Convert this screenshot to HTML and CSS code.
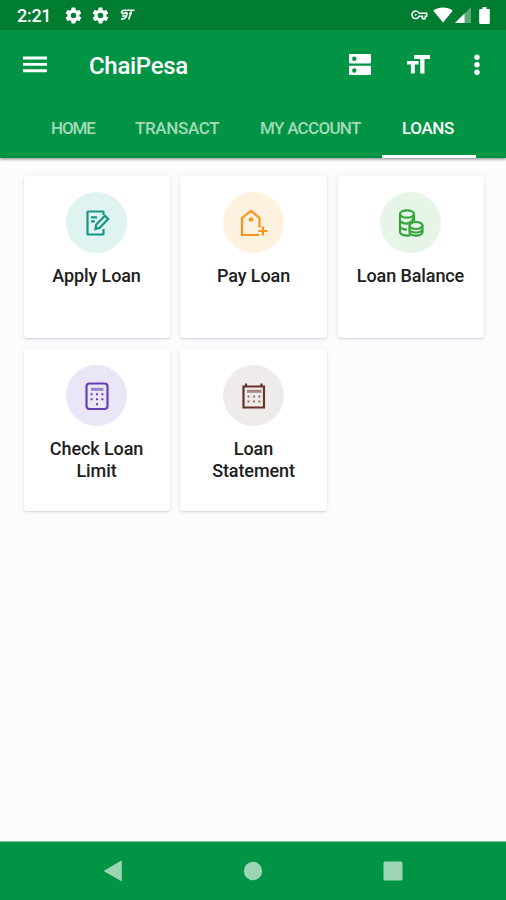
FILE: index.html
```html
<!DOCTYPE html>
<html lang="en">
<head>
    <meta charset="UTF-8">
    <meta name="viewport" content="width=device-width, initial-scale=1.0">
    <title>ChaiPesa</title>
    <link rel="stylesheet" href="styles.css">
</head>
<body>
    <div class="status-bar">
        <span class="clock">2:21</span>
        <svg class="gear" width="19" height="19" viewBox="0 0 24 24"><path fill-rule="evenodd" d="M19.4 13a7.500 7.500 0 0 0 0-2l2.100-1.600a.5.5 0 0 0 .1-.6l-2-3.500a.5.5 0 0 0-.6-.2l-2.500 1a7.300 7.300 0 0 0-1.700-1L14.400 2.400a.5.500 0 0 0-.5-.4h-4a.5.5 0 0 0-.5.400L9.100 5.100a7.700 7.700 0 0 0-1.700 1l-2.500-1a.5.5 0 0 0-.6.200l-2 3.500a.5.500 0 0 0 .1.600L4.500 11a7.900 7.900 0 0 0 0 2l-2.100 1.600a.5.5 0 0 0-.1.600l2 3.500c.1.200.4.300.6.200l2.500-1a7.300 7.300 0 0 0 1.700 1l.4 2.700c0 .2.200.4.500.4h4c.3 0 .5-.2.500-.4l.4-2.700a7.700 7.700 0 0 0 1.700-1l2.500 1c.2.100.5 0 .6-.2l2-3.500a.5.500 0 0 0-.1-.6zM12 15.500a3.500 3.500 0 1 1 0-7 3.500 3.500 0 0 1 0 7z"/></svg>
        <svg class="gear" width="19" height="19" viewBox="0 0 24 24"><path fill-rule="evenodd" d="M19.4 13a7.500 7.500 0 0 0 0-2l2.100-1.600a.5.5 0 0 0 .1-.6l-2-3.500a.5.5 0 0 0-.6-.2l-2.500 1a7.300 7.300 0 0 0-1.700-1L14.400 2.400a.5.500 0 0 0-.5-.4h-4a.5.5 0 0 0-.5.400L9.100 5.100a7.700 7.700 0 0 0-1.700 1l-2.500-1a.5.5 0 0 0-.6.200l-2 3.500a.5.500 0 0 0 .1.600L4.500 11a7.900 7.900 0 0 0 0 2l-2.100 1.600a.5.5 0 0 0-.1.600l2 3.500c.1.200.4.300.6.200l2.500-1a7.300 7.300 0 0 0 1.700 1l.4 2.700c0 .2.200.4.500.4h4c.3 0 .5-.2.500-.4l.4-2.700a7.700 7.700 0 0 0 1.700-1l2.500 1c.2.100.5 0 .6-.2l2-3.500a.5.500 0 0 0-.1-.6zM12 15.500a3.500 3.500 0 1 1 0-7 3.500 3.500 0 0 1 0 7z"/></svg>
        <svg class="brand" width="15" height="12" viewBox="0 0 15 12" fill="none" stroke="#fff" stroke-width="1.600"><path d="M14.500 1.200H5C2 1.200.8 3 2 4.200c1.200 1 3.500 0 4.500-1.500M7.200 3.500C7 8 4.500 10.500 1 10M2 7h4M11.500 2 8.700 10.500M9 4.500h3"/></svg>
        <div class="status-right">
            <svg width="17" height="10" viewBox="0 0 17 10" fill="none" stroke="#fff" stroke-width="1.500"><path d="M8.200 3.300h7.500v3h-1.500v2.500h-2.800V6.300H8.200A3.800 3.800 0 1 1 8.200 3.300z"/><circle cx="4.700" cy="4.800" r="1" fill="#fff" stroke="none"/></svg>
            <svg class="wifi" width="20" height="16" viewBox="0 0 20 16"><path d="M.3 3.700C5.700-.6 14.300-.6 19.700 3.700L10 15.500z"/></svg>
            <svg class="signal" width="16" height="16" viewBox="0 0 16 16"><path d="M0 16 16 0v16z" opacity=".35"/><path d="M0 16 9.500 6.500V16z"/></svg>
            <svg class="battery" width="11" height="17" viewBox="0 0 11 17"><path d="M3.500 0h4v2H10a.9.900 0 0 1 .8.900v13a1 1 0 0 1-1 1H1.200a1 1 0 0 1-1-1v-13A.9.900 0 0 1 1 2h2.500z"/></svg>
        </div>
    </div>

    <header class="app-header">
        <div class="toolbar">
            <svg class="menu" width="24" height="17" viewBox="0 0 24 17"><path d="M0 .5h24v2.900H0zM0 6.900h24v2.900H0zM0 13.300h24v2.900H0z"/></svg>
            <h1>ChaiPesa</h1>
            <svg class="dns" width="22" height="22" viewBox="0 0 22 22"><path fill-rule="evenodd" d="M1.200 0h19.600c.7 0 1.200.5 1.200 1.200v7c0 .7-.5 1.200-1.200 1.200H1.200C.5 9.400 0 8.900 0 8.200v-7C0 .5.500 0 1.200 0zM5.300 2.600a2.200 2.200 0 1 0 0 4.400 2.200 2.200 0 0 0 0-4.400zM1.200 11.700h19.600c.7 0 1.200.5 1.200 1.200v7c0 .7-.5 1.200-1.200 1.200H1.200c-.7 0-1.200-.5-1.200-1.200v-7c0-.7.500-1.200 1.200-1.200zM5.300 14.300a2.200 2.200 0 1 0 0 4.400 2.200 2.200 0 0 0 0-4.400z"/></svg>
            <svg class="text-size" width="23" height="19" viewBox="0 0 23 19"><path d="M7 0h16v4h-5.500v14.500h-4.300V4H7zM0 5.900h11.500v3.700H7.800v8.900H3.900V9.600H0z"/></svg>
            <svg class="more" width="6" height="22" viewBox="0 0 6 22"><circle cx="3" cy="3.200" r="2.700"/><circle cx="3" cy="10.700" r="2.700"/><circle cx="3" cy="18.200" r="2.700"/></svg>
        </div>
        <nav class="tabs">
            <a class="tab home">HOME</a>
            <a class="tab transact">TRANSACT</a>
            <a class="tab account">MY ACCOUNT</a>
            <a class="tab loans active">LOANS</a>
        </nav>
    </header>

    <main class="card-grid">
        <div class="card">
            <div class="circle teal">
                <svg width="28" height="28" viewBox="0 0 28 28"><path d="M20.500 6V3q0-.5-.5-.5H5q-.5 0-.5.500v22q0 .5.500.500h15q.5 0 .5-.5v-5M8 8.300h6M8 12.300h4"/><path d="m12.500 20 .7-4.500 8.800-8.700 3.200 3.200-8.500 8.800z"/></svg>
            </div>
            <p class="apply">Apply Loan</p>
        </div>
        <div class="card">
            <div class="circle orange">
                <svg width="30" height="30" viewBox="0 0 30 30"><path d="M20.500 19.500V10L12 2.800 3 10v17h17M24 18.500v9M19.500 23h9"/><circle class="solid" cx="12" cy="11.500" r="2.300"/></svg>
            </div>
            <p class="pay">Pay Loan</p>
        </div>
        <div class="card">
            <div class="circle green">
                <svg width="28" height="30" viewBox="0 0 28 30"><ellipse cx="10" cy="6" rx="7" ry="3.700"/><path d="M3 6v18c0 2 3 3.600 7 3.600 1.500 0 2.500-.2 3.500-.5M17 6v7M3 12c0 2 3 3.600 7 3.600 1 0 2-.1 2.700-.3M3 18c0 2 3 3.600 7 3.600M17 6c0 3-.5 9-7 9"/><ellipse cx="19" cy="17.500" rx="6.500" ry="3.500"/><path d="M12.500 17.500V24c0 2 2.800 3.600 6.500 3.600s6.500-1.600 6.500-3.600v-6.500M12.500 21c0 2 2.800 3.500 6.500 3.500s6.500-1.500 6.500-3.500"/></svg>
            </div>
            <p class="balance">Loan Balance</p>
        </div>
        <div class="card">
            <div class="circle purple">
                <svg width="28" height="30" viewBox="0 0 28 30"><rect x="3.500" y="2.500" width="21" height="25.500" rx="3"/><path class="soft" d="M8 8.300h12.500"/><path class="solid" d="M7.600 12.200h2v2h-2zM13 12.200h2v2h-2zM18.400 12.200h2v2h-2zM7.600 17.200h2v2h-2zM13 17.200h2v2h-2zM18.400 17.200h2v2h-2zM13 22.200h2v2h-2z"/></svg>
            </div>
            <p class="limit">Check Loan<br>Limit</p>
        </div>
        <div class="card">
            <div class="circle brown">
                <svg width="28" height="30" viewBox="0 0 28 30"><path d="M3.500 5.500h20.500v21H3.500zM6 2.500v3M21.500 2.500v3"/><path class="soft" d="M7 10.300h14.500"/><path class="dots" d="M7.500 14.400h2v2h-2zM13 14.400h2v2h-2zM18.400 14.400h2v2h-2zM7.500 19.500h2v2h-2zM13 19.500h2v2h-2zM18.400 19.500h2v2h-2z"/></svg>
            </div>
            <p class="statement">Loan<br>Statement</p>
        </div>
    </main>

    <footer class="nav-bar">
        <svg width="20" height="22" viewBox="0 0 20 22"><path d="M.5 11 18 .8q.8-.3.800.5v19.400q0 .8-.8.400z"/></svg>
        <svg width="20" height="20" viewBox="0 0 20 20"><circle cx="10" cy="10" r="9.200"/></svg>
        <svg width="20" height="20" viewBox="0 0 20 20"><rect x=".5" y=".5" width="19" height="19" rx="1.500"/></svg>
    </footer>
</body>
</html>
```

FILE: styles.css
```css
* {
    box-sizing: border-box;
}
body {
    margin: 0;
    height: 900px;
    display: flex;
    flex-direction: column;
    font-family: Roboto, sans-serif;
    background-color: #fcfcff;
    color: #202020;
    overflow: hidden;
}
svg {
    display: block;
    flex-shrink: 0;
}
.status-bar {
    height: 30px;
    display: flex;
    align-items: center;
    padding: 0 16px 0 17px;
    background-color: #007d31;
}
.status-bar svg, .toolbar svg {
    fill: #fff;
}
.status-bar .brand, .status-right svg:first-child {
    fill: none;
}
.clock {
    width: 47px;
    padding-top: 1px;
    color: #fff;
    font-size: 18px;
    font-weight: 500;
    letter-spacing: -0.3px;
}
.gear {
    margin-right: 8px;
}
.brand {
    margin-left: 2px;
}
.status-right {
    display: flex;
    align-items: center;
    margin-left: auto;
}
.wifi {
    margin-left: 5px;
}
.signal {
    margin-left: 2px;
}
.battery {
    margin-left: 8px;
}
.app-header {
    height: 128px;
    background-color: #009444;
    box-shadow: 0 1px 3px rgba(0, 0, 0, 0.5);
}
.toolbar {
    height: 70px;
    display: flex;
    align-items: center;
    padding: 0 26px 0 23px;
}
.menu {
    margin-bottom: 1px;
}
h1 {
    margin: 2px auto 0 42px;
    color: #fff;
    font-size: 24px;
    font-weight: 500;
    letter-spacing: -0.3px;
}
.dns {
    margin-right: 37px;
    position: relative;
    left: 1px;
}
.text-size {
    margin: 0 44px 2px 0;
}
.tabs {
    height: 58px;
    display: flex;
    padding-left: 31px;
}
.tab {
    height: 58px;
    padding: 0 20px;
    line-height: 56px;
    white-space: nowrap;
    color: #a5dab9;
    font-size: 17px;
    font-weight: 500;
    border-bottom: 3px solid transparent;
}
.home {
    width: 84px;
    letter-spacing: -1.1px;
}
.transact {
    width: 125px;
    letter-spacing: -0.35px;
}
.account {
    width: 142px;
    letter-spacing: -0.7px;
}
.loans {
    width: 94px;
    letter-spacing: -0.4px;
}
.tab.active {
    color: #fff;
    border-color: #fff;
}
.card-grid {
    flex: 1;
    display: grid;
    grid-template-columns: 146px 147px 146px;
    grid-auto-rows: 162px;
    gap: 11px 10.5px;
    align-content: start;
    padding: 18px 0 0 23.5px;
}
.card {
    display: flex;
    flex-direction: column;
    align-items: center;
    padding-top: 16px;
    background-color: #fff;
    border-radius: 3px;
    box-shadow: 0 1px 2px rgba(0, 0, 0, 0.15), 0 0 8px rgba(60, 60, 90, 0.05);
}
.circle {
    width: 61px;
    height: 61px;
    display: flex;
    align-items: center;
    justify-content: center;
    border-radius: 50%;
}
.circle svg {
    fill: none;
    stroke: currentColor;
    stroke-width: 2.2;
}
.circle .solid {
    fill: currentColor;
    stroke: none;
}
.circle .soft {
    stroke: #a68781;
    stroke-width: 3;
}
.purple .soft {
    stroke: #9b83d0;
}
.circle .dots {
    fill: #8d746f;
    stroke: none;
}
.teal {
    background-color: #dff3f1;
    color: #199583;
}
.orange {
    background-color: #fff1df;
    color: #f7941e;
}
.green {
    background-color: #e7f5e9;
    color: #35a53b;
}
.purple {
    background-color: #ebe6f7;
    color: #6541b0;
}
.brown {
    background-color: #eeebea;
    color: #65332b;
}
.card p {
    margin: 12px 0 0;
    line-height: 22px;
    text-align: center;
    font-size: 18px;
    font-weight: 500;
    letter-spacing: -0.1px;
}
.nav-bar {
    height: 59px;
    display: flex;
    align-items: center;
    justify-content: space-between;
    padding: 0 103px;
    background-color: #009444;
    border-top: 1px solid #80c69c;
}
.nav-bar svg {
    fill: #9bd5b3;
}
```
